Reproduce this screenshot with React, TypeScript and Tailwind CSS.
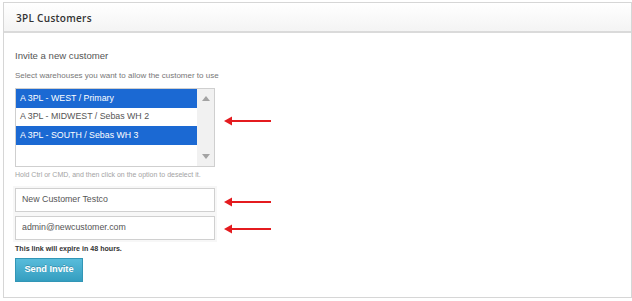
import React from "react";

function Arrow({ className = "" }: { className?: string }) {
  return (
    <svg width="48" height="10" viewBox="0 0 48 10" className={className}>
      <path d="M7 4h40v2H7z" fill="#e41b1f" />
      <path d="M0 5L8 0.5V9.5Z" fill="#e41b1f" />
    </svg>
  );
}

const options = [
  { label: "A 3PL - WEST / Primary", selected: true },
  { label: "A 3PL - MIDWEST / Sebas WH 2", selected: false },
  { label: "A 3PL - SOUTH / Sebas WH 3", selected: true },
];

export default function App() {
  return (
    <div className="h-[301px] w-[632px] bg-white pl-[3px] pt-[2px] font-['Liberation_Sans',Arial,sans-serif]">
      <section className="h-[296px] w-[629px] border border-[#d6d6d6] bg-white">
        <div className="flex h-[30px] items-center border-b-2 border-[#dadada] bg-gradient-to-b from-white to-[#f4f4f4] pl-[12px] pt-[2px]">
          <h3 className="font-['Open_Sans',sans-serif] text-[10px] font-semibold tracking-[0.3px] text-[#333]">3PL Customers</h3>
        </div>

        <div className="pl-[11px] pt-[17px]">
          <p className="text-[9.6px] leading-[12px] text-[#555]">Invite a new customer</p>
          <p className="mt-[9px] text-[8px] leading-[10px] text-[#777]">Select warehouses you want to allow the customer to use</p>

          <div className="mt-[7px] flex items-start">
            <div className="flex h-[79px] w-[200px] border border-[#cfcfcf] bg-white">
              <div className="flex-1">
                {options.map((o) => (
                  <div
                    key={o.label}
                    className={
                      o.selected
                        ? "flex h-[18.5px] items-center bg-[#1b69d3] pl-[4px] text-[8.8px] text-white"
                        : "flex h-[18.5px] items-center pl-[4px] text-[8.8px] text-[#555]"
                    }
                  >
                    {o.label}
                  </div>
                ))}
              </div>
              <div className="flex w-[17px] flex-col items-center justify-between bg-[#f1f1f1] py-[7px]">
                <svg width="8" height="5" viewBox="0 0 8 5">
                  <path d="M0 5L4 0L8 5Z" fill="#a3a3a3" />
                </svg>
                <svg width="8" height="5" viewBox="0 0 8 5">
                  <path d="M0 0L4 5L8 0Z" fill="#a3a3a3" />
                </svg>
              </div>
            </div>
            <Arrow className="ml-[9px] mt-[28px]" />
          </div>

          <p className="mt-[3px] text-[7px] leading-[10px] text-[#a3a3a3]">Hold Ctrl or CMD, and then click on the option to deselect it.</p>

          <div className="mt-[8px] flex items-start">
            <div className="flex h-[24px] w-[200px] items-center border border-[#d0d0d0] bg-white pl-[6px] text-[8.8px] text-[#555] shadow-[0_0_0_2px_#f7f7f7]">
              New Customer Testco
            </div>
            <Arrow className="ml-[9px] mt-[9px]" />
          </div>
          <div className="mt-[4px] flex items-start">
            <div className="flex h-[24px] w-[200px] items-center border border-[#d0d0d0] bg-white pl-[6px] text-[8.8px] text-[#555] shadow-[0_0_0_2px_#f7f7f7]">
              admin@newcustomer.com
            </div>
            <Arrow className="ml-[9px] mt-[8px]" />
          </div>

          <p className="mt-[4px] text-[7.1px] font-bold leading-[10px] text-[#333]">This link will expire in 48 hours.</p>

          <button
            type="button"
            className="mt-[4px] h-[24px] w-[68px] border border-[#3296b6] bg-gradient-to-b from-[#58bcdb] to-[#349ec0] text-[9.2px] font-bold text-white [text-shadow:0_-1px_0_rgba(0,0,0,0.2)]"
          >
            Send Invite
          </button>
        </div>
      </section>
    </div>
  );
}
